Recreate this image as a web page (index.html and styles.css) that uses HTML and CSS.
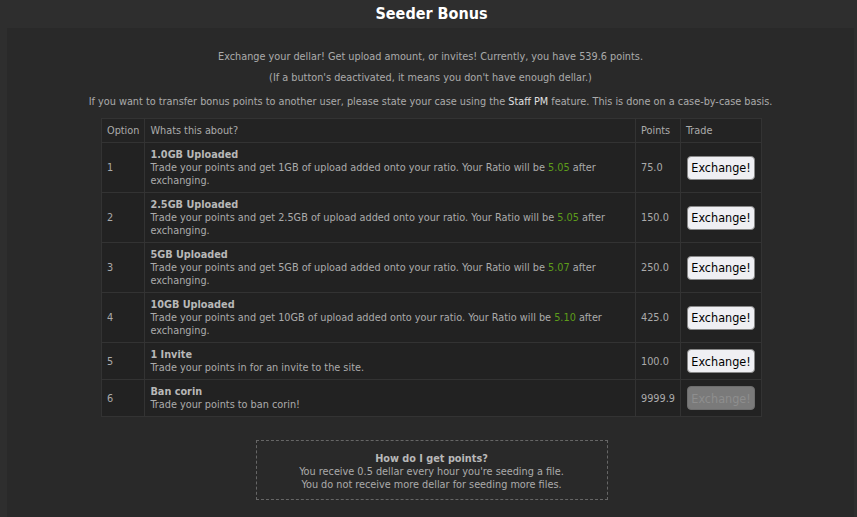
FILE: index.html
```html
<!DOCTYPE html>
<html lang="en">
<head>
    <meta charset="UTF-8">
    <title>Seeder Bonus</title>
    <link rel="stylesheet" href="styles.css">
</head>
<body>
    <h2>Seeder Bonus</h2>
    <div class="box">
        <p>Exchange your dellar! Get upload amount, or invites! Currently, you have 539.6 points.</p>
        <p>(If a button's deactivated, it means you don't have enough dellar.)</p>
        <p>If you want to transfer bonus points to another user, please state your case using the <a href="#">Staff PM</a> feature. This is done on a case-by-case basis.</p>

        <table class="bonus">
            <thead>
                <tr>
                    <td class="opt">Option</td>
                    <td>Whats this about?</td>
                    <td class="pts">Points</td>
                    <td class="trade">Trade</td>
                </tr>
            </thead>
            <tbody>
                <tr>
                    <td class="opt">1</td>
                    <td><b>1.0GB Uploaded</b><br>Trade your points and get 1GB of upload added onto your ratio. Your Ratio will be <span class="r">5.05</span> after exchanging.</td>
                    <td class="pts">75.0</td>
                    <td class="trade"><button>Exchange!</button></td>
                </tr>
                <tr>
                    <td class="opt">2</td>
                    <td><b>2.5GB Uploaded</b><br>Trade your points and get 2.5GB of upload added onto your ratio. Your Ratio will be <span class="r">5.05</span> after exchanging.</td>
                    <td class="pts">150.0</td>
                    <td class="trade"><button>Exchange!</button></td>
                </tr>
                <tr>
                    <td class="opt">3</td>
                    <td><b>5GB Uploaded</b><br>Trade your points and get 5GB of upload added onto your ratio. Your Ratio will be <span class="r">5.07</span> after exchanging.</td>
                    <td class="pts">250.0</td>
                    <td class="trade"><button>Exchange!</button></td>
                </tr>
                <tr>
                    <td class="opt">4</td>
                    <td><b>10GB Uploaded</b><br>Trade your points and get 10GB of upload added onto your ratio. Your Ratio will be <span class="r">5.10</span> after exchanging.</td>
                    <td class="pts">425.0</td>
                    <td class="trade"><button>Exchange!</button></td>
                </tr>
                <tr>
                    <td class="opt">5</td>
                    <td><b>1 Invite</b><br>Trade your points in for an invite to the site.</td>
                    <td class="pts">100.0</td>
                    <td class="trade"><button>Exchange!</button></td>
                </tr>
                <tr>
                    <td class="opt">6</td>
                    <td><b>Ban corin</b><br>Trade your points to ban corin!</td>
                    <td class="pts">9999.9</td>
                    <td class="trade"><button disabled>Exchange!</button></td>
                </tr>
            </tbody>
        </table>

        <div class="howto">
            <b>How do I get points?</b><br>
            You receive 0.5 dellar every hour you're seeding a file.<br>
            You do not receive more dellar for seeding more files.
        </div>
    </div>
</body>
</html>
```

FILE: styles.css
```css
body{
    margin: 0;
    background-color: #2e2e2e;
    color: #ababab;
    font-family: Tahoma, "DejaVu Sans Condensed", "Liberation Sans", sans-serif;
    font-size: 10.8px;
    line-height: 13px;
}
h2{
    margin: 0;
    height: 28px;
    line-height: 28px;
    text-align: center;
    color: #fff;
    font-size: 16px;
    font-family: Tahoma, "DejaVu Sans Condensed", sans-serif;
    font-weight: bold;
    padding-left: 6px;
}
.box{
    background-color: #292929;
    margin: 0 3px 0 7px;
    padding: 22px 0 17px;
}
.box p{
    margin: 0 0 8px;
    text-align: center;
    line-height: 13px;
}
.box p:nth-child(2){
    margin-bottom: 11px;
}
a{
    color: #e0e0e0;
    text-decoration: none;
}
table.bonus{
    border-collapse: collapse;
    margin: 10px auto 0;
    width: 661px;
    background-color: #222;
    position: relative;
    left: 1px;
}
.bonus td{
    border: 1px solid #333;
    padding: 5px;
    vertical-align: middle;
}
.bonus thead td{
    background-color: #232323;
}
.bonus b{
    color: #b8b8b8;
}
.opt{
    width: 30px;
}
.pts{
    width: 33px;
}
.trade{
    width: 70px;
}
.r{
    color: #5d9c1a;
}
button{
    font-family: Tahoma, "DejaVu Sans Condensed", "Liberation Sans", sans-serif;
    font-size: 12.5px;
    color: #000;
    background-color: #efeff3;
    border: 1px solid #888;
    border-radius: 4px;
    height: 24px;
    width: 68px;
    padding: 0;
    margin-left: 1px;
}
button:disabled{
    background-color: #7a7a7a;
    border-color: #6d6d6d;
    color: #8e8e8e;
}
.howto{
    width: 340px;
    margin: 23px auto 0;
    border: 1px dashed #666;
    padding: 11px 5px 8px;
    text-align: center;
    position: relative;
    left: 1px;
}
.howto b{
    color: #b8b8b8;
}
```
